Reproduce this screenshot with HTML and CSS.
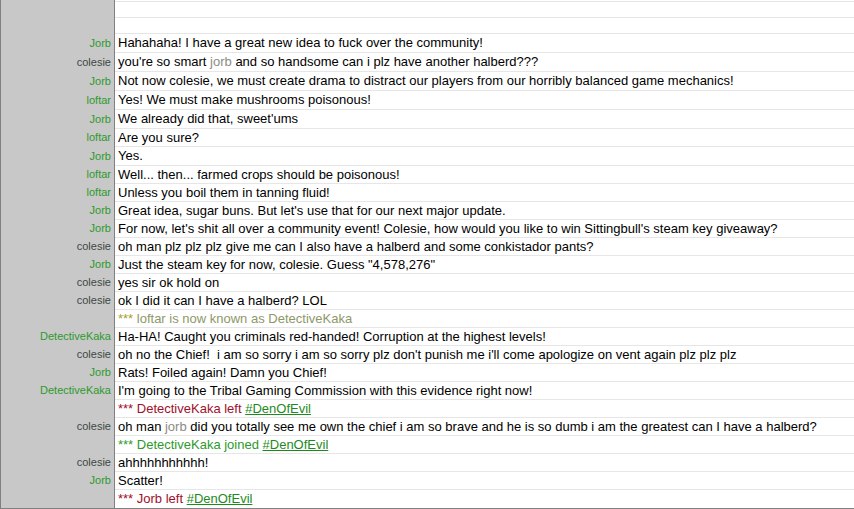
FILE: index.html
```html
<!DOCTYPE html>
<html>
  <head>
    <title>#DenOfEvil</title>
    <link rel="stylesheet" href="styles.css">
  </head>
  <body>
    <div class="log">
      <div class="row top"><div class="nick"></div><div class="msg"></div></div>
      <div class="row gap"><div class="nick"></div><div class="msg"></div></div>
      <div class="row gap"><div class="nick"></div><div class="msg"></div></div>

      <div class="row tall"><div class="nick green">Jorb</div><div class="msg">Hahahaha! I have a great new idea to fuck over the community!</div></div>
      <div class="row tall"><div class="nick dark">colesie</div><div class="msg">you're so smart <span class="mention">jorb</span> and so handsome can i plz have another halberd???</div></div>
      <div class="row tall"><div class="nick green">Jorb</div><div class="msg">Not now colesie, we must create drama to distract our players from our horribly balanced game mechanics!</div></div>
      <div class="row tall"><div class="nick green">loftar</div><div class="msg">Yes! We must make mushrooms poisonous!</div></div>
      <div class="row tall"><div class="nick green">Jorb</div><div class="msg">We already did that, sweet'ums</div></div>
      <div class="row"><div class="nick green">loftar</div><div class="msg">Are you sure?</div></div>
      <div class="row tall"><div class="nick green">Jorb</div><div class="msg">Yes.</div></div>
      <div class="row"><div class="nick green">loftar</div><div class="msg">Well... then... farmed crops should be poisonous!</div></div>
      <div class="row"><div class="nick green">loftar</div><div class="msg">Unless you boil them in tanning fluid!</div></div>
      <div class="row"><div class="nick green">Jorb</div><div class="msg">Great idea, sugar buns. But let's use that for our next major update.</div></div>
      <div class="row"><div class="nick green">Jorb</div><div class="msg">For now, let's shit all over a community event! Colesie, how would you like to win Sittingbull's steam key giveaway?</div></div>
      <div class="row"><div class="nick dark">colesie</div><div class="msg">oh man plz plz plz give me can I also have a halberd and some conkistador pants?</div></div>
      <div class="row"><div class="nick green">Jorb</div><div class="msg">Just the steam key for now, colesie. Guess "4,578,276"</div></div>
      <div class="row"><div class="nick dark">colesie</div><div class="msg">yes sir ok hold on</div></div>
      <div class="row"><div class="nick dark">colesie</div><div class="msg">ok I did it can I have a halberd? LOL</div></div>
      <div class="row"><div class="nick"></div><div class="msg nickchange"><span class="stars">***</span> loftar is now known as DetectiveKaka</div></div>
      <div class="row"><div class="nick green">DetectiveKaka</div><div class="msg">Ha-HA! Caught you criminals red-handed! Corruption at the highest levels!</div></div>
      <div class="row"><div class="nick dark">colesie</div><div class="msg">oh no the Chief!&nbsp; i am so sorry i am so sorry plz don't punish me i'll come apologize on vent again plz plz plz</div></div>
      <div class="row"><div class="nick green">Jorb</div><div class="msg">Rats! Foiled again! Damn you Chief!</div></div>
      <div class="row"><div class="nick green">DetectiveKaka</div><div class="msg">I'm going to the Tribal Gaming Commission with this evidence right now!</div></div>
      <div class="row"><div class="nick"></div><div class="msg part">*** DetectiveKaka left <a class="chan" href="#">#DenOfEvil</a></div></div>
      <div class="row"><div class="nick dark">colesie</div><div class="msg">oh man <span class="mention">jorb</span> did you totally see me own the chief i am so brave and he is so dumb i am the greatest can I have a halberd?</div></div>
      <div class="row"><div class="nick"></div><div class="msg join">*** DetectiveKaka joined <a class="chan" href="#">#DenOfEvil</a></div></div>
      <div class="row"><div class="nick dark">colesie</div><div class="msg">ahhhhhhhhhhh!</div></div>
      <div class="row"><div class="nick green">Jorb</div><div class="msg">Scatter!</div></div>
      <div class="row last"><div class="nick"></div><div class="msg part">*** Jorb left <a class="chan" href="#">#DenOfEvil</a></div></div>
    </div>
  </body>
</html>
```
FILE: styles.css
```css
html,
body {
  margin: 0;
  padding: 0;
  background: #ffffff;
  overflow: hidden;
}

.log {
  border-left: 1px solid #808080;
  border-bottom: 2px solid #808080;
  font-family: "Liberation Sans", Arial, sans-serif;
  font-size: 13px;
  color: #000000;
}

.row {
  display: flex;
  height: 18px;
  line-height: 17px;
}

.row.tall {
  height: 19px;
  line-height: 18px;
}

.row.top {
  height: 2px;
  line-height: 1px;
}

.row.gap {
  height: 16px;
}

.nick {
  width: 114px;
  flex: none;
  box-sizing: border-box;
  background: #c8c8c8;
  border-right: 1px solid #808080;
  padding-right: 3px;
  text-align: right;
  font-size: 11px;
  white-space: nowrap;
}

.msg {
  flex: 1;
  border-bottom: 1px solid #e6e6e6;
  padding-left: 3px;
  white-space: nowrap;
  overflow: hidden;
}

.row.last .msg {
  border-bottom: none;
}

.green {
  color: #2c9a2c;
}

.dark {
  color: #3d4944;
}

.mention {
  color: #8c8c84;
}

.nickchange {
  color: #8e9868;
}

.stars {
  color: #a8a030;
}

.part {
  color: #a0102a;
}

.join {
  color: #2c9a2c;
}

.chan {
  color: #1e8a1e;
  text-decoration: underline;
}
```
